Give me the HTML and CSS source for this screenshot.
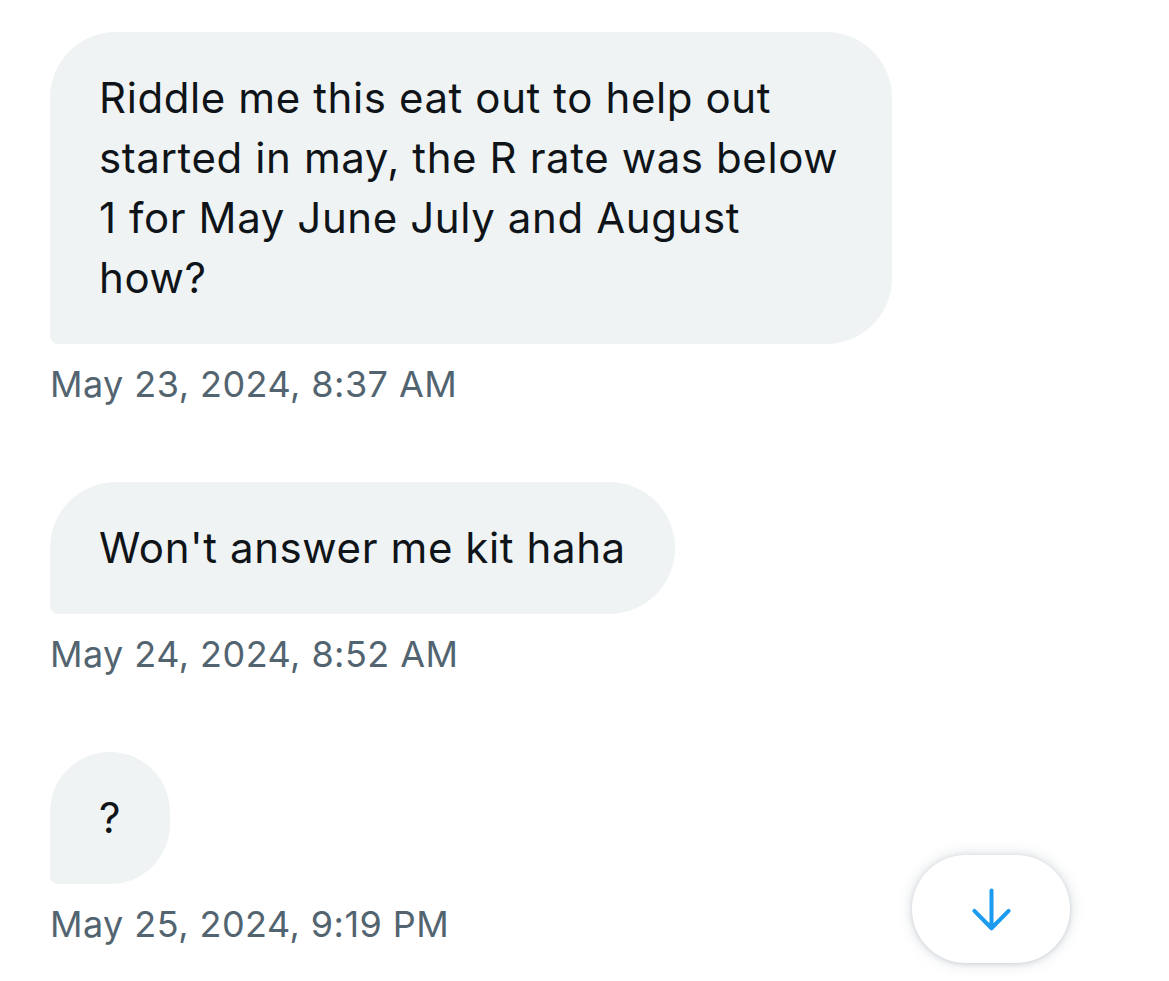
FILE: index.html
```html
<!DOCTYPE html>
<html lang="en">
<head>
    <meta charset="UTF-8">
    <meta name="viewport" content="width=device-width, initial-scale=1.0">
    <title>Messages</title>
    <link rel="stylesheet" href="styles.css">
</head>
<body>
    <div class="conversation">
        <div class="message">
            <div class="bubble bubble-wide">Riddle me this eat out to help out started in may, the R rate was below 1 for May June July and August<br>how?</div>
            <div class="timestamp">May 23, 2024, 8:37 AM</div>
        </div>
        <div class="message">
            <div class="bubble">Won't answer me kit haha</div>
            <div class="timestamp">May 24, 2024, 8:52 AM</div>
        </div>
        <div class="message">
            <div class="bubble">?</div>
            <div class="timestamp">May 25, 2024, 9:19 PM</div>
        </div>
    </div>

    <button class="scroll-down" aria-label="Scroll to bottom">
        <svg viewBox="0 0 24 24" width="57" height="57">
            <path d="M12 4v15.8M4.8 12.6l7.2 7.3 7.2-7.3" fill="none" stroke="#1d9bf0" stroke-width="1.7" stroke-linecap="round" stroke-linejoin="round"/>
        </svg>
    </button>
</body>
</html>
```

FILE: styles.css
```css
body {
    font-family: Inter, "Noto Sans", Arial, sans-serif;
    color: #0f1419;
    background-color: #fff;
    margin: 0;
    padding: 0;
    height: 981px;
    overflow: hidden;
    position: relative;
}

.conversation {
    display: flex;
    flex-direction: column;
    gap: 76px;
    padding: 32px 50px 0;
}

.message {
    display: flex;
    flex-direction: column;
    align-items: flex-start;
}

.bubble {
    background-color: #eff3f4;
    border-radius: 66px 66px 66px 8px;
    padding: 36px 49px;
    font-size: 42px;
    line-height: 60px;
    letter-spacing: 0.6px;
}

.bubble-wide {
    width: 744px;
}

.timestamp {
    margin-top: 18px;
    font-size: 36px;
    line-height: 44px;
    color: #536471;
    letter-spacing: 0.45px;
}

.scroll-down {
    position: absolute;
    left: 912px;
    top: 855px;
    width: 158px;
    height: 108px;
    border: none;
    border-radius: 54px;
    background-color: #fff;
    box-shadow: 0 0 14px rgba(101, 119, 134, 0.28), 0 1px 4px rgba(101, 119, 134, 0.18);
    display: flex;
    justify-content: center;
    align-items: center;
    cursor: pointer;
    padding: 0;
}
```
